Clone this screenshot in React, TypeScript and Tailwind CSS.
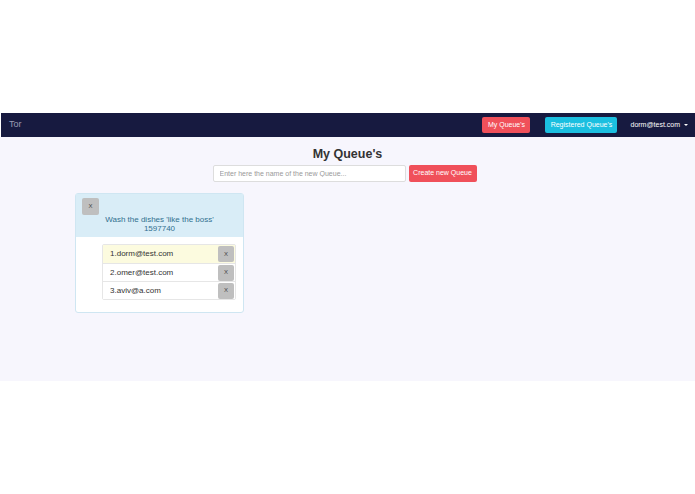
import React from "react";

const queue = {
  title: "Wash the dishes 'like the boss'",
  id: "1597740",
  members: ["dorm@test.com", "omer@test.com", "aviv@a.com"],
};

function NavBar() {
  return (
    <nav className="ml-px flex h-[24px] items-center bg-[#171a40] pl-[8px] pr-[7px]">
      <span className="text-[9px] text-[#9a9cb3]">Tor</span>
      <div className="ml-auto flex items-center">
        <button className="h-[16px] w-[48px] rounded-[2px] bg-[#f0505a] text-[7px] text-white">
          My Queue's
        </button>
        <button className="ml-[15px] h-[16px] w-[72px] rounded-[2px] bg-[#1bbfe0] text-[7px] text-white">
          Registered Queue's
        </button>
        <span className="ml-[13px] flex items-center gap-[4px] text-[7px] text-white">
          dorm@test.com
          <span className="border-x-[2px] border-t-[2px] border-x-transparent border-t-white" />
        </span>
      </div>
    </nav>
  );
}

function QueueCard() {
  return (
    <div className="w-[169px] rounded-[3px] border border-[#cfe6f2] bg-white">
      <div className="bg-[#d9edf7] px-[6px] pb-[4px] pt-[4px]">
        <button className="flex h-[17px] w-[17px] items-center justify-center rounded-[2px] bg-[#bfbfbf] text-[6px] text-[#444]">
          X
        </button>
        <div className="text-center text-[8px] leading-[9px] text-[#31708f]">
          <div>{queue.title}</div>
          <div>{queue.id}</div>
        </div>
      </div>
      <div className="pb-[12px] pl-[26px] pr-[7px] pt-[7px]">
        <ul className="rounded-[2px] border border-[#e6e6e6]">
          {queue.members.map((email, i) => (
            <li
              key={email}
              className={`flex h-[18px] items-center border-[#e6e6e6] ${i > 0 ? "border-t" : ""} ${
                i === 0 ? "bg-[#fcfbdf]" : "bg-white"
              }`}
            >
              <span className="pl-[7px] text-[8px] text-[#333]">
                {i + 1}.{email}
              </span>
              <button className="ml-auto mr-px flex h-[16px] w-[16px] items-center justify-center rounded-[2px] bg-[#bfbfbf] text-[6px] text-[#444]">
                X
              </button>
            </li>
          ))}
        </ul>
      </div>
    </div>
  );
}

export default function App() {
  return (
    <div className="h-[494px] w-full bg-white font-['Liberation_Sans',Arial,sans-serif]">
      <div className="h-[113px]" />
      <NavBar />
      <main className="h-[244px] bg-[#f7f6fd]">
        <div className="flex flex-col items-center pt-[10px]">
          <h1 className="text-[12.5px] font-bold leading-[15px] text-[#333]">My Queue's</h1>
          <div className="mr-[6px] mt-[3px] flex items-center">
            <input
              placeholder="Enter here the name of the new Queue..."
              className="h-[17px] w-[193px] rounded-[2px] border border-[#ddd] bg-white px-[6px] text-[7px] text-[#333] outline-none placeholder:text-[#999]"
            />
            <button className="ml-[3px] h-[17px] w-[68px] rounded-[2px] bg-[#f0505a] text-[7px] text-white">
              Create new Queue
            </button>
          </div>
        </div>
        <div className="pl-[75px] pt-[11px]">
          <QueueCard />
        </div>
      </main>
    </div>
  );
}
